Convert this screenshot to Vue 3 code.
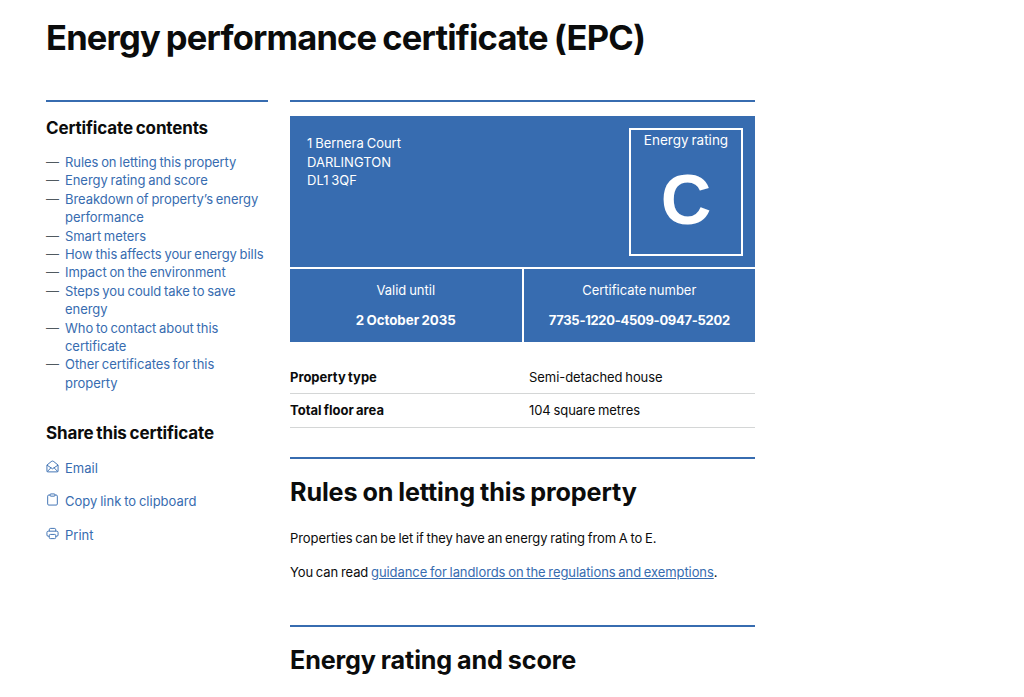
<template>
  <div class="page">
    <h1>Energy performance certificate (EPC)</h1>

    <div class="columns">
      <!-- Colonne de gauche -->
      <aside class="sidebar">
        <h2 class="side-title">Certificate contents</h2>
        <ul class="contents">
          <li v-for="item in contents" :key="item"><a href="#">{{ item }}</a></li>
        </ul>

        <h2 class="side-title share-title">Share this certificate</h2>
        <ul class="share">
          <li>
            <svg viewBox="0 0 14 14" class="icon" fill="none" stroke="currentColor" stroke-width="1">
              <path d="M1 5.500 5.600 1.700a2.200 2.200 0 0 1 2.800 0L13 5.500v6.300a1 1 0 0 1-1 1H2a1 1 0 0 1-1-1z" />
              <path d="M1 5.500l6 4 6-4M1.300 12.500 5.400 8.300M12.700 12.500 8.600 8.300" />
            </svg>
            <a href="#">Email</a>
          </li>
          <li>
            <svg viewBox="0 0 14 14" class="icon" fill="none" stroke="currentColor" stroke-width="1">
              <path d="M4.500 2.200H3a1.200 1.200 0 0 0-1.200 1.200v8.400A1.200 1.200 0 0 0 3 13h8a1.200 1.200 0 0 0 1.200-1.200V3.400A1.200 1.200 0 0 0 11 2.200H9.500" />
              <rect x="4.500" y="1" width="5" height="2.400" rx=".5" />
            </svg>
            <a href="#">Copy link to clipboard</a>
          </li>
          <li>
            <svg viewBox="0 0 14 14" class="icon" fill="none" stroke="currentColor" stroke-width="1">
              <path d="M3.500 4.500V3a1.500 1.500 0 0 1 1.500-1.500h4A1.500 1.500 0 0 1 10.500 3v1.500" />
              <path d="M3.500 10H2.500A1.500 1.500 0 0 1 1 8.500V6a1.500 1.500 0 0 1 1.500-1.500h9A1.500 1.500 0 0 1 13 6v2.500a1.500 1.500 0 0 1-1.500 1.500h-1" />
              <rect x="3.500" y="8" width="7" height="4.500" rx="1.200" />
            </svg>
            <a href="#">Print</a>
          </li>
        </ul>
      </aside>

      <!-- Colonne principale -->
      <main class="main">
        <div class="epc">
          <div class="epc-top">
            <div class="address">
              <div>1 Bernera Court</div>
              <div>DARLINGTON</div>
              <div>DL1 3QF</div>
            </div>
            <div class="rating">
              <div class="rating-label">Energy rating</div>
              <div class="rating-letter">C</div>
            </div>
          </div>
          <div class="epc-bottom">
            <div class="cell">
              <div>Valid until</div>
              <strong>2 October 2035</strong>
            </div>
            <div class="cell">
              <div>Certificate number</div>
              <strong class="number">7735-1220-4509-0947-5202</strong>
            </div>
          </div>
        </div>

        <dl class="summary">
          <div class="row">
            <dt>Property type</dt>
            <dd>Semi-detached house</dd>
          </div>
          <div class="row">
            <dt>Total floor area</dt>
            <dd>104 square metres</dd>
          </div>
        </dl>

        <section class="block">
          <h2>Rules on letting this property</h2>
          <p>Properties can be let if they have an energy rating from A to E.</p>
          <p>You can read <a href="#">guidance for landlords on the regulations and exemptions</a>.</p>
        </section>

        <section class="block second">
          <h2>Energy rating and score</h2>
        </section>
      </main>
    </div>
  </div>
</template>

<script setup>
const contents = [
  'Rules on letting this property',
  'Energy rating and score',
  'Breakdown of property’s energy performance',
  'Smart meters',
  'How this affects your energy bills',
  'Impact on the environment',
  'Steps you could take to save energy',
  'Who to contact about this certificate',
  'Other certificates for this property'
]
</script>

<style>
html, body {
  margin: 0;
  background: #fff;
}
</style>

<style scoped>
.page {
  height: 697px;
  overflow: hidden;
  box-sizing: border-box;
  padding: 15px 0 0 46px;
  font-family: Inter, "Noto Sans", sans-serif;
  font-size: 13px;
  word-spacing: -0.8px;
  color: #0b0c0c;
}

h1 {
  margin: 0;
  font-size: 34.500px;
  line-height: 46px;
  font-weight: 700;
  letter-spacing: -0.8px;
  word-spacing: -1.500px;
}

.columns {
  display: flex;
  gap: 22px;
  margin-top: 39px;
}

.sidebar {
  width: 222px;
  border-top: 2px solid #376cb0;
  padding-top: 14px;
}

.side-title {
  margin: 0;
  font-size: 17px;
  line-height: 24px;
  font-weight: 700;
  letter-spacing: -0.150px;
  word-spacing: -1px;
}

.contents {
  list-style: none;
  margin: 13px 0 0;
  padding: 0;
  letter-spacing: -0.060px;
}

.contents li {
  position: relative;
  padding-left: 19px;
  line-height: 18.400px;
}

.contents li::before {
  content: "—";
  position: absolute;
  left: 0;
  color: #505a5f;
}

a {
  color: #376cb0;
  text-decoration: none;
}

.share-title {
  margin-top: 29px;
}

.share {
  list-style: none;
  margin: 6px 0 0;
  padding: 0;
}

.share li {
  display: flex;
  align-items: center;
  gap: 6px;
  height: 33.300px;
  color: #376cb0;
}

.icon {
  width: 13px;
  height: 13px;
  flex: none;
  margin-top: -3px;
}

.main {
  width: 465px;
  border-top: 2px solid #376cb0;
  padding-top: 14px;
}

.epc {
  background: #376cb0;
  color: #fff;
}

.epc-top {
  display: flex;
  justify-content: space-between;
  height: 153px;
  box-sizing: border-box;
  padding: 12px 12px 12px 17px;
  border-bottom: 2px solid #fff;
}

.address {
  padding-top: 6px;
  line-height: 18.500px;
}

.rating {
  width: 114px;
  height: 128px;
  box-sizing: border-box;
  border: 2px solid #fff;
  text-align: center;
}

.rating-label {
  font-size: 13.500px;
  line-height: 18px;
  padding-top: 1px;
}

.rating-letter {
  font-size: 70px;
  line-height: 80px;
  font-weight: 700;
  margin-top: 11px;
  font-family: "Liberation Sans", sans-serif;
}

.epc-bottom {
  display: flex;
  height: 73px;
}

.cell {
  flex: 1;
  text-align: center;
  padding-top: 11px;
  line-height: 20px;
}

.cell + .cell {
  border-left: 2px solid #fff;
}

.cell strong {
  display: block;
  margin-top: 10px;
  font-weight: 700;
  font-size: 13.300px;
}

.cell .number {
  font-size: 13px;
  letter-spacing: -0.300px;
}

.summary {
  margin: 18px 0 0;
}

.row {
  display: flex;
  height: 33px;
  align-items: center;
  border-bottom: 1px solid #d4d6d6;
}

.row + .row {
  height: 32.500px;
}

dt {
  width: 239px;
  font-weight: 700;
}

dd {
  margin: 0;
  letter-spacing: -0.060px;
}

.block {
  margin-top: 29.500px;
  border-top: 2px solid #376cb0;
}

.block h2 {
  margin: 15px 0 0;
  font-size: 25.200px;
  line-height: 36px;
  font-weight: 700;
  letter-spacing: -0.150px;
  word-spacing: -0.800px;
}

.block p {
  margin: 19px 0 0;
  line-height: 18px;
  letter-spacing: -0.080px;
}

.block p + p {
  margin-top: 16px;
}

.block p a {
  text-decoration: underline;
}

.second {
  margin-top: 44px;
}
</style>
